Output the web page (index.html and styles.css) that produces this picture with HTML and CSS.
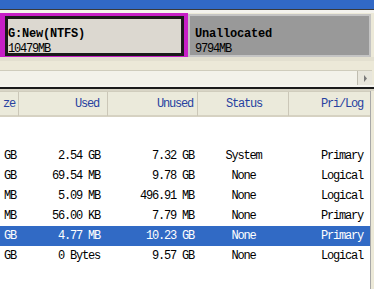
FILE: index.html
```html
<!DOCTYPE html>
<html>
<head>
  <meta charset="utf-8">
  <title>Partition list</title>
  <link rel="stylesheet" href="styles.css">
</head>
<body>
  <div class="titlebar"></div>
  <div class="topline"></div>

  <!-- disk map -->
  <div class="diskmap">
    <div class="part selected">
      <div class="box">
        <div class="pname">G:New(NTFS)</div>
        <div class="psize">10479MB</div>
      </div>
    </div>
    <div class="part free">
      <div class="pname">Unallocated</div>
      <div class="psize">9794MB</div>
    </div>
  </div>

  <div class="spacer"></div>
  <div class="hscroll">
    <div class="track"></div>
    <div class="arrow">
      <svg width="5" height="7" viewBox="0 0 5 7"><path d="M1 0 L4 3.5 L1 7 Z" fill="#7a7a7a"/></svg>
    </div>
  </div>
  <div class="divider"></div>

  <!-- partition list -->
  <div class="list">
    <div class="head">
      <div class="col c1">ze</div>
      <div class="col c2">Used</div>
      <div class="col c3">Unused</div>
      <div class="col c4">Status</div>
      <div class="col c5">Pri/Log</div>
    </div>
    <div class="body">
      <div class="row"><div class="c1"></div><div class="c2"></div><div class="c3"></div><div class="c4"></div><div class="c5"></div></div>
      <div class="row"><div class="c1">GB</div><div class="c2">2.54 GB</div><div class="c3">7.32 GB</div><div class="c4">System</div><div class="c5">Primary</div></div>
      <div class="row"><div class="c1">GB</div><div class="c2">69.54 MB</div><div class="c3">9.78 GB</div><div class="c4">None</div><div class="c5">Logical</div></div>
      <div class="row"><div class="c1">MB</div><div class="c2">5.09 MB</div><div class="c3">496.91 MB</div><div class="c4">None</div><div class="c5">Logical</div></div>
      <div class="row"><div class="c1">MB</div><div class="c2">56.00 KB</div><div class="c3">7.79 MB</div><div class="c4">None</div><div class="c5">Primary</div></div>
      <div class="row sel"><div class="c1">GB</div><div class="c2">4.77 MB</div><div class="c3">10.23 GB</div><div class="c4">None</div><div class="c5">Primary</div></div>
      <div class="row"><div class="c1">GB</div><div class="c2">0 Bytes</div><div class="c3">9.57 GB</div><div class="c4">None</div><div class="c5">Logical</div></div>
    </div>
  </div>
</body>
</html>
```

FILE: styles.css
```css
body { margin: 0; background: #ece9d8; font-family: "Liberation Mono", monospace;
       font-size: 12px; letter-spacing: -1.2px; color: #000; overflow: hidden; }

.titlebar { height: 9px; background: #3169c6; }
.topline { height: 1px; background: #3a3a3a; border-bottom: 3px solid #f4f3ee; }

.diskmap { display: flex; height: 44px; }
.part { box-sizing: border-box; }
.selected { width: 188px; background: #c61fc6; padding: 3px 4px 1px 5px; }
.selected .box { height: 100%; box-sizing: border-box; border: 3px solid #1a1a1a;
                 background: #dcd8d0; padding: 8px 0 0 0; }
.free { width: 183px; background: #999999; border: 2px solid #c4c4c4;
        padding: 11px 0 0 5px; margin-top: 1px; height: 43px; }
.pname { font-weight: bold; letter-spacing: -0.2px; line-height: 14px; }
.psize { line-height: 16px; }

.spacer { height: 13px; border-top: 4px solid #e3e0d0; box-sizing: border-box; }
.hscroll { display: flex; height: 14px; border-top: 1px solid #cfccbc; margin-right: 2px; }
.hscroll .track { flex: 1; background: #f3f2ea; }
.hscroll .arrow { width: 14px; background: #e8e6dc; border-left: 1px solid #c0bdb0;
                  display: flex; align-items: center; justify-content: center; }
.divider { height: 2px; background: #1c1c1c; border-top: 2px solid #f6f5f0;
           border-bottom: 2px solid #d8d5c6; }

.list { background: #fff; height: 200px; margin-right: 3px; border-right: 1px solid #a8a8a8; }
.head { display: grid; grid-template-columns: 19px 89px 90px 91px 80px; height: 23px;
        background: #ebeadb; border-bottom: 2px solid #d6d2c2; border-top: 1px solid #d0cdbd;
        color: #2741a0; line-height: 24px; }
.head .col { border-right: 1px solid #cbc7b8; box-sizing: border-box; }
.head .col.c5 { border-right: none; }
.body { padding-top: 9px; }
.row { display: grid; grid-template-columns: 19px 89px 90px 91px 80px; height: 20px; line-height: 21px; }
.row.sel { background: #316ac5; color: #fff; }

.c1 { text-align: right; padding-right: 3px; }
.c2 { text-align: right; padding-right: 8px; }
.c3 { text-align: right; padding-right: 4px; }
.c4 { text-align: center; }
.c5 { text-align: right; padding-right: 6px; }
.head .c4 { padding-left: 2px; }
```
